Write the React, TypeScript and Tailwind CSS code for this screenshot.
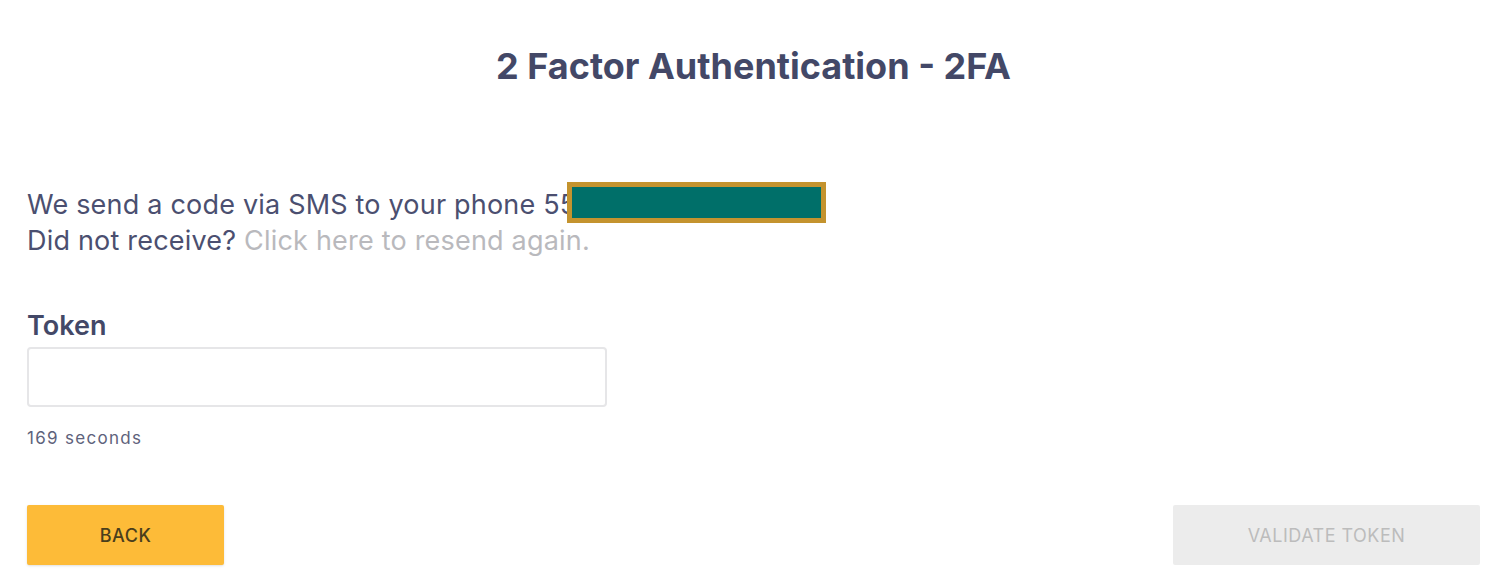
import React from "react";

export default function App() {
  return (
    <div className="w-[1504px] h-[580px] bg-white overflow-hidden pl-[27px] pr-[24px] pt-[42px]" style={{ fontFamily: "Inter, 'Liberation Sans', sans-serif" }}>
      <h1 className="text-center text-[36px] leading-[48px] font-bold text-[#434867]">2 Factor Authentication - 2FA</h1>
      <div className="mt-[95px] text-[27px] leading-[37px] tracking-[0.2px] text-[#4b4f70]">
        <div className="flex items-center">
          <span>We send a code via SMS to your phone 55</span>
          <span className="inline-block w-[259px] h-[41px] bg-[#006f69] border-[5px] border-[#c4932e] -ml-[10px] -mt-[3px]"></span>
        </div>
        <div className="-mt-[1px]">
          Did not receive? <span className="text-[#b9b9bd]">Click here to resend again.</span>
        </div>
      </div>
      <div className="mt-[50px] text-[27px] leading-[34px] font-semibold text-[#434867]">Token</div>
      <div className="mt-[4px] w-[580px] h-[60px] border-2 border-[#e6e6e8] rounded-[4px]"></div>
      <div className="mt-[21px] text-[17px] leading-[20px] tracking-[1.3px] text-[#5e627b]">169 seconds</div>
      <div className="mt-[57px] flex justify-between">
        <button className="w-[197px] h-[60px] bg-[#fdbb38] rounded-[2px] text-[18px] tracking-[0.5px] font-medium text-[#4a3e1c] shadow-sm">BACK</button>
        <button className="w-[307px] h-[60px] bg-[#ececec] rounded-[2px] text-[18px] tracking-[0.5px] text-[#bcbcbc]">VALIDATE TOKEN</button>
      </div>
    </div>
  );
}
